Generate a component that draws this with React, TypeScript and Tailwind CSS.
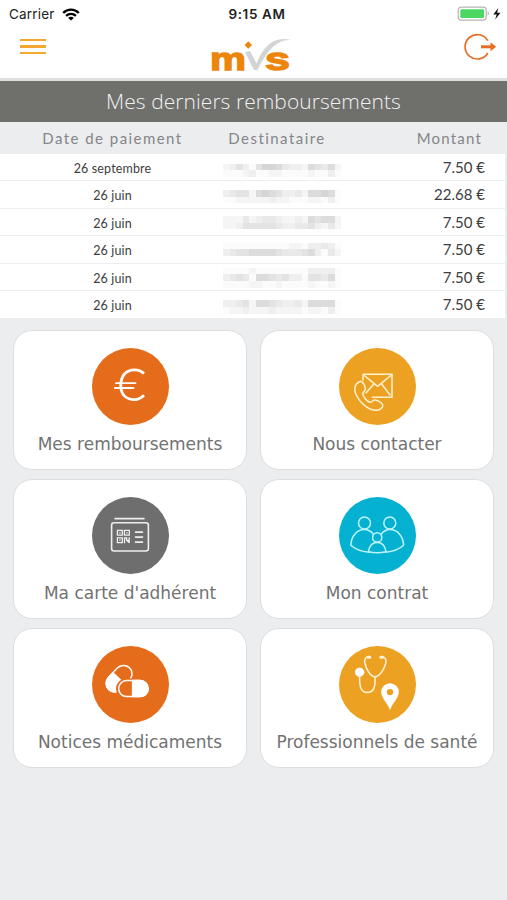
import React from 'react';

interface Refund {
  date: string;
  amount: string;
  offset: number;
  mask: string[];
}

// Masked recipient: one digit per cell, 0 = white, 9 = darkest grey
const REFUNDS: Refund[] = [
  { date: '26 septembre', amount: '7.50 €', offset: 10, mask: ['235315776433265462', '111231122111121131'] },
  { date: '26 juin', amount: '22.68 €', offset: 9, mask: ['345526765334266761', '112222232211122131'] },
  { date: '26 juin', amount: '7.50 €', offset: 7.5, mask: ['222423443223265662', '223555554334453242'] },
  { date: '26 juin', amount: '7.50 €', offset: 6.5, mask: ['111111111122133431', '345566665444563142'] },
  { date: '26 juin', amount: '7.50 €', offset: 4, mask: ['111121111111133331', '345416654533155461', '111122112111121121'] },
  { date: '26 juin', amount: '7.50 €', offset: 9, mask: ['334526654334266661', '122322232222122131'] },
];

const GREYS = ['#ffffff', '#fbfbfb', '#f5f5f5', '#efefef', '#e9e9e9', '#e3e3e3', '#dcdcdc', '#d5d5d5', '#cccccc', '#c4c4c4'];

function Mask({ rows, offset }: { rows: string[]; offset: number }) {
  return (
    <div className="w-[118px] blur-[0.6px]" style={{ paddingTop: offset }}>
      {rows.map((row, i) => (
        <div key={i} className="flex h-[6.6px]">
          {row.split('').map((level, j) => (
            <span key={j} className="flex-1" style={{ backgroundColor: GREYS[Number(level)] }} />
          ))}
        </div>
      ))}
    </div>
  );
}

const iconProps = {
  viewBox: '0 0 78 78',
  className: 'h-[78px] w-[78px] shrink-0',
  fill: 'none',
  stroke: '#fff',
  strokeLinecap: 'round' as const,
  strokeLinejoin: 'round' as const,
};

function EuroIcon() {
  return (
    <svg {...iconProps} strokeWidth="2.8">
      <path d="M53 26.6C50 23.8 47 22.8 43.5 22.8C35 22.8 29.8 28.8 29.8 38.2C29.8 47.5 35 52.6 43.5 52.6C47 52.6 50 51.2 53 48.2" strokeWidth="2.8" strokeLinecap="butt" />
      <path d="M25 36.2H44.5M23.8 41H42.5" strokeWidth="1.8" />
    </svg>
  );
}

function ContactIcon() {
  return (
    <svg {...iconProps} stroke="#fff3cf" strokeWidth="1.5">
      <path d="M25 33V27.3H54V50.2H34.5" />
      <path d="M25.6 28L39.6 39.3L53.4 28M36 36.8L28 46M43.5 36.8L52 48" />
      <path d="M22.5 34.2C17 36.4 15 41.5 18.5 48.5C23 57.3 31 63.3 38 63.3C42 63.3 45 60.5 44.8 58.2C44.5 56 39 52.5 36.5 53C34.5 53.4 33.7 55.7 31.8 55.3C29 54.5 24.9 49.5 24.8 46.5C24.8 44.8 27.6 43.8 27.5 42C27.3 39.5 25 34 22.5 34.2Z" />
    </svg>
  );
}

function CardIcon() {
  return (
    <svg {...iconProps} stroke="#eeeeee" strokeWidth="1.6">
      <path d="M24 22.6H53" />
      <rect x="20.6" y="26.8" width="36.8" height="28.2" rx="2.5" />
      <path d="M44.5 36.1H51.5M44.5 41.1H51.5M44.5 46.1H51.5" />
      <g strokeWidth="1.3" strokeLinecap="butt" strokeLinejoin="miter">
        <path d="M26.4 34.3h4.9v4.9h-4.9zM33.4 34.3h4.9v4.9h-4.9zM26.4 41.8h4.9v4.9h-4.9z" />
        <path d="M28.2 36.8h1.4M35.2 36.8h1.4M28.2 44.2h1.4" />
        <path d="M33.5 47.3V42h2.2v2.3h3M38.2 41.2v5.8M36 44.5l2.3 2.3" />
      </g>
    </svg>
  );
}

function FamilyIcon() {
  return (
    <svg {...iconProps} stroke="#bdf3fa" strokeWidth="1.5">
      <circle cx="26.5" cy="27" r="6" />
      <circle cx="51.8" cy="27" r="6" />
      <circle cx="39.2" cy="41.4" r="4.6" />
      <path d="M35.4 38.4C32.8 35 29.8 33.6 26.5 33.6C19 33.6 13.2 39.9 12.8 49.3C17.3 53.5 24 55.6 31 56.2" />
      <path d="M43 38.4C45.6 35 48.5 33.6 51.8 33.6C59.5 33.6 65.2 39.9 65.6 49.3C61.2 53.5 54.5 55.6 47.5 56.2" />
      <path d="M30.4 55.7C31.2 49.8 34.5 46.4 39.2 46.4C44 46.4 47.2 49.8 48 55.7C42.2 57.2 36.2 57.2 30.4 55.7Z" />
    </svg>
  );
}

function PillsIcon() {
  return (
    <svg {...iconProps} strokeWidth="1.5">
      <g transform="rotate(-47 28 33)">
        <rect x="12.6" y="25" width="30" height="17" rx="8.5" />
        <path d="M27.6 25H21.1a8.5 8.5 0 0 0 0 17H27.6z" fill="#fff" />
      </g>
      <rect x="26.4" y="34.8" width="31.6" height="18" rx="9" fill="#e46c1b" stroke="#e46c1b" strokeWidth="3" />
      <rect x="27.6" y="35.6" width="29.6" height="16" rx="8" />
      <path d="M41.6 35.6h7.6a8 8 0 0 1 0 16H41.6z" fill="#fff" />
    </svg>
  );
}

function HealthIcon() {
  return (
    <svg {...iconProps} strokeWidth="1.5" stroke="#fff3da">
      <path d="M31 11.8C27 11.8 26 14.8 27 18.5C28.4 24.5 32.5 31.8 37 31.8C41.5 31.8 46 24.5 47.7 18.5C48.5 14.8 47.5 11.8 43.5 11.8" />
      <path d="M37 31.8C37.2 37.5 37.5 47.5 29.7 47.5C22 47.5 21.5 40.5 21.5 30" />
      <path d="M30.3 12.2h1.6M42.8 12.2h1.6" strokeWidth="3" />
      <circle cx="21.7" cy="27.2" r="4.1" fill="#fff" stroke="#fff" strokeWidth="1" />
      <path fillRule="evenodd" fill="#fff" stroke="none" d="M52 65C49.5 58 43.2 53 43.2 47a8.8 8.8 0 0 1 17.6 0C60.8 53 54.5 58 52 65ZM52 43.9a3.2 3.2 0 1 0 0 6.4a3.2 3.2 0 1 0 0-6.4Z" />
    </svg>
  );
}

const TILES = [
  { label: 'Mes remboursements', color: 'bg-[#e46c1b]', icon: <EuroIcon /> },
  { label: 'Nous contacter', color: 'bg-[#eda122]', icon: <ContactIcon /> },
  { label: "Ma carte d'adhérent", color: 'bg-[#6f6e6e]', icon: <CardIcon /> },
  { label: 'Mon contrat', color: 'bg-[#05b1d1]', icon: <FamilyIcon /> },
  { label: 'Notices médicaments', color: 'bg-[#e46c1b]', icon: <PillsIcon /> },
  { label: 'Professionnels de santé', color: 'bg-[#eda122]', icon: <HealthIcon /> },
];

function StatusBar() {
  return (
    <div className="grid h-7 grid-cols-3 items-center pr-1.5 pl-[9px] font-['Inter'] text-[13.5px] text-[#222]">
      <div className="flex items-center gap-[7px]">
        <span className="tracking-[0.2px]">Carrier</span>
        <svg viewBox="0 0 18 13" className="h-[13px] w-[18px]" fill="none" stroke="#000" strokeWidth="2.3">
          <path d="M1.2 5C5.5 0.6 12.5 0.6 16.8 5" />
          <path d="M4.1 7.9C6.9 5.2 11.1 5.2 13.9 7.9" />
          <path d="M9 12.6L6.2 9.9C7.8 8.5 10.2 8.5 11.8 9.9Z" fill="#000" stroke="none" />
        </svg>
      </div>
      <span className="pl-1 text-center font-semibold tracking-[0.6px] whitespace-nowrap">9:15 AM</span>
      <svg viewBox="0 0 46 16" className="h-4 w-[46px] justify-self-end">
        <rect x="3.2" y="1.1" width="28" height="13" rx="3" fill="#fff" stroke="#b5b5b5" strokeWidth="1.2" />
        <rect x="5.3" y="3.2" width="23.8" height="8.8" rx="1.2" fill="#4cd763" />
        <path d="M32.6 5.3c1.7.6 1.7 3.8 0 4.4z" fill="#b5b5b5" />
        <path d="M43.3 2L38.3 8.5h3.4l-1.6 5L45.5 6.7h-3.4z" fill="#111" />
      </svg>
    </div>
  );
}

function Logo() {
  return (
    <svg viewBox="0 0 84 48" className="h-12 w-[84px]">
      <path d="M36 19L41 18L47.5 30.5C53.5 16 63 2.5 82 7C67 6 57.5 19 48.5 37H45Z" fill="#d3d4d6" />
      <path d="M39.3 8.3L43 12L39.3 15.7L35.6 12Z" fill="#ed850c" />
      <g fill="#ed850c" stroke="#ed850c" strokeWidth="1.3" fontFamily="Liberation Sans" fontWeight="bold">
        <text x="1" y="37" fontSize="31" textLength="36" lengthAdjust="spacingAndGlyphs">m</text>
        <text x="56" y="37" fontSize="31" textLength="25" lengthAdjust="spacingAndGlyphs">s</text>
      </g>
    </svg>
  );
}

export default function App() {
  return (
    <div className="h-[900px] w-[507px] overflow-hidden bg-[#ebedef]">
      <header className="h-[81px] border-b-[3px] border-[#dfdfdf] bg-white">
        <StatusBar />
        <div className="flex h-[50px] items-start justify-between overflow-visible pr-[10px] pl-5">
          <button type="button" className="mt-[11px] flex w-[26px] flex-col gap-[4.2px]">
            <span className="h-[2.3px] w-full bg-[#f3a92f]" />
            <span className="h-[2.3px] w-full bg-[#f3a92f]" />
            <span className="h-[2.3px] w-full bg-[#f3a92f]" />
          </button>
          <div className="mt-[5px] mr-[7px] -mb-[3px]">
            <Logo />
          </div>
          <svg viewBox="0 0 34 28" className="mt-[5px] h-7 w-[34px]" fill="none" stroke="#e46f24" strokeWidth="1.7">
            <path d="M24.8 7.6A12.2 12.2 0 1 0 24.8 20" />
            <path d="M18 13.8H28.5" strokeWidth="3" />
            <path d="M27.5 9.3L33.2 13.8L27.5 18.3Z" fill="#e46f24" stroke="none" />
          </svg>
        </div>
      </header>

      <h1 className="flex h-[41px] items-center justify-center bg-[#6f6f6c] font-['Open_Sans'] text-[21px] font-light text-[#f1f1f1]">
        <span className="tracking-[0.05px]">Mes derniers remboursements</span>
      </h1>

      <section className="font-['Lato']">
        <div className="grid h-[31.5px] grid-cols-[225px_104px_1fr] items-center text-center text-[15px] tracking-[1.45px] text-[#858688]">
          <span>Date de paiement</span>
          <span>Destinataire</span>
          <span className="pr-[25px] text-right tracking-[1.2px]">Montant</span>
        </div>
        {REFUNDS.map((refund, i) => (
          <div
            key={i}
            className="mr-[2px] grid h-[27.6px] grid-cols-[223px_144px_1fr] border-b border-[#ebedee] bg-white text-[#3d3d3d]"
          >
            <span className="pt-[5px] pl-[2px] text-center text-[12.5px] leading-[19px] tracking-[0.15px]">{refund.date}</span>
            <Mask rows={refund.mask} offset={refund.offset} />
            <span className="pt-[4px] pr-[20px] text-right text-[15px] leading-[19px]">{refund.amount}</span>
          </div>
        ))}
      </section>

      <main className="grid grid-cols-2 gap-x-[13px] gap-y-[9px] pt-[10.5px] pr-[13px] pl-[13px]">
        {TILES.map((tile) => (
          <div
            key={tile.label}
            className="flex h-[140px] flex-col items-center rounded-[19px] border border-[#dcdedf] bg-white pt-[17px] font-['DejaVu_Sans'] text-[#727272]"
          >
            <div className={`flex h-[77px] w-[77px] items-center justify-center rounded-full ${tile.color}`}>{tile.icon}</div>
            <span className="mt-[7.5px] text-[17px] leading-6 whitespace-nowrap">{tile.label}</span>
          </div>
        ))}
      </main>
    </div>
  );
}
